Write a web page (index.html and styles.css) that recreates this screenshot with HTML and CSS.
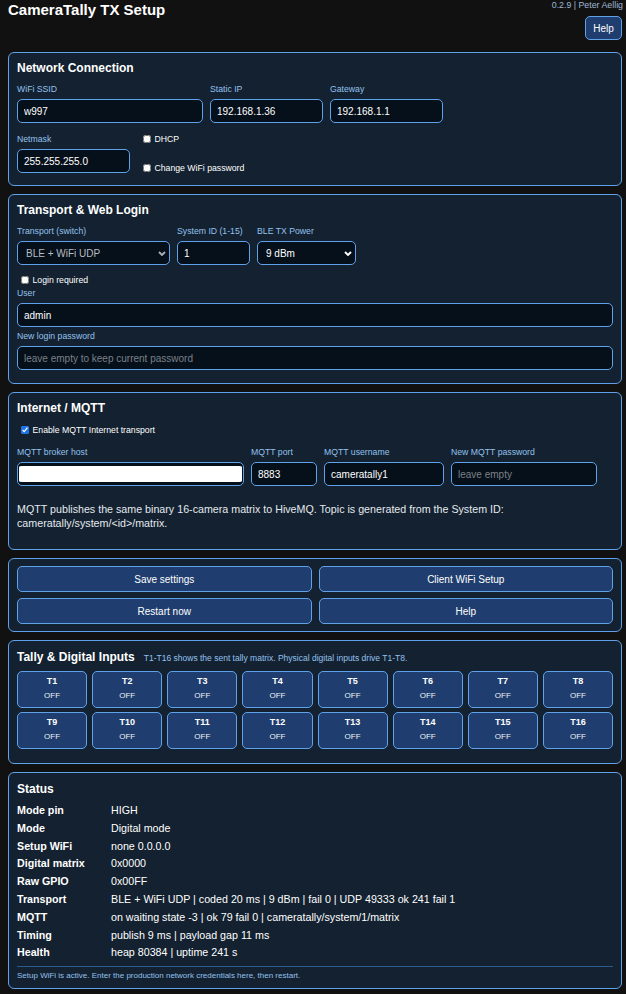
FILE: index.html
```html
<!DOCTYPE html>
<html lang="en">
  <head>
    <meta charset="UTF-8" />
    <meta name="viewport" content="width=device-width, initial-scale=1.0" />
    <title>CameraTally TX Setup</title>
    <link rel="stylesheet" href="styles.css">
  </head>
  <body>
    <div class="page">
      <header class="top">
        <h1>CameraTally TX Setup</h1>
        <div class="meta">
          <div class="version">0.2.9 | Peter Aellig</div>
          <button class="btn btn-top">Help</button>
        </div>
      </header>

      <section class="card card-net">
        <h2>Network Connection</h2>
        <div class="row">
          <div class="field w-ssid">
            <label>WiFi SSID</label>
            <input type="text" value="w997">
          </div>
          <div class="field w-ip">
            <label>Static IP</label>
            <input type="text" value="192.168.1.36">
          </div>
          <div class="field w-ip">
            <label>Gateway</label>
            <input type="text" value="192.168.1.1">
          </div>
        </div>
        <div class="row row-next">
          <div class="field w-ip">
            <label>Netmask</label>
            <input type="text" value="255.255.255.0">
          </div>
          <div class="checks">
            <label class="check"><input type="checkbox">DHCP</label>
            <label class="check"><input type="checkbox">Change WiFi password</label>
          </div>
        </div>
      </section>

      <section class="card card-login">
        <h2>Transport &amp; Web Login</h2>
        <div class="row">
          <div class="field w-transport">
            <label>Transport (switch)</label>
            <div class="select">
              <select disabled><option>BLE + WiFi UDP</option></select>
              <svg viewBox="0 0 8 5" width="8" height="5"><path d="M1 1l3 3 3-3" /></svg>
            </div>
          </div>
          <div class="field w-id">
            <label>System ID (1-15)</label>
            <input type="text" value="1">
          </div>
          <div class="field w-power">
            <label>BLE TX Power</label>
            <div class="select">
              <select><option>9 dBm</option></select>
              <svg viewBox="0 0 8 5" width="8" height="5"><path d="M1 1l3 3 3-3" /></svg>
            </div>
          </div>
        </div>
        <label class="check check-line"><input type="checkbox">Login required</label>
        <div class="field field-user">
          <label>User</label>
          <input type="text" value="admin">
        </div>
        <div class="field field-pass">
          <label>New login password</label>
          <input type="password" placeholder="leave empty to keep current password">
        </div>
      </section>

      <section class="card">
        <h2>Internet / MQTT</h2>
        <label class="check check-line"><input type="checkbox" checked>Enable MQTT Internet transport</label>
        <div class="row row-mqtt">
          <div class="field w-host">
            <label>MQTT broker host</label>
            <input type="text" class="redacted" value="">
          </div>
          <div class="field w-port">
            <label>MQTT port</label>
            <input type="text" value="8883">
          </div>
          <div class="field w-user">
            <label>MQTT username</label>
            <input type="text" value="cameratally1">
          </div>
          <div class="field w-mpass">
            <label>New MQTT password</label>
            <input type="password" placeholder="leave empty">
          </div>
        </div>
        <p class="info">MQTT publishes the same binary 16-camera matrix to HiveMQ. Topic is generated from the System ID: cameratally/system/&lt;id&gt;/matrix.</p>
      </section>

      <section class="card card-actions">
        <div class="actions">
          <button class="btn">Save settings</button>
          <button class="btn">Client WiFi Setup</button>
          <button class="btn">Restart now</button>
          <button class="btn">Help</button>
        </div>
      </section>

      <section class="card card-tally">
        <div class="title-line">
          <h2>Tally &amp; Digital Inputs</h2>
          <span class="note">T1-T16 shows the sent tally matrix. Physical digital inputs drive T1-T8.</span>
        </div>
        <div class="tiles" id="tiles"></div>
      </section>

      <section class="card card-status">
        <h2>Status</h2>
        <div class="status">
          <b>Mode pin</b><span>HIGH</span>
          <b>Mode</b><span>Digital mode</span>
          <b>Setup WiFi</b><span>none 0.0.0.0</span>
          <b>Digital matrix</b><span>0x0000</span>
          <b>Raw GPIO</b><span>0x00FF</span>
          <b>Transport</b><span>BLE + WiFi UDP | coded 20 ms | 9 dBm | fail 0 | UDP 49333 ok 241 fail 1</span>
          <b>MQTT</b><span>on waiting state -3 | ok 79 fail 0 | cameratally/system/1/matrix</span>
          <b>Timing</b><span>publish 9 ms | payload gap 11 ms</span>
          <b>Health</b><span>heap 80384 | uptime 241 s</span>
        </div>
        <div class="hint">Setup WiFi is active. Enter the production network credentials here, then restart.</div>
      </section>
    </div>
    <script>
      const tiles = document.getElementById("tiles");
      for (let i = 1; i <= 16; i++) {
        const t = document.createElement("div");
        t.className = "tile";
        t.innerHTML = `<b>T${i}</b><span>OFF</span>`;
        tiles.appendChild(t);
      }
    </script>
  </body>
</html>
```

FILE: styles.css
```css
* {
  margin: 0;
  padding: 0;
  box-sizing: border-box;
}

body {
  background: #111111;
  color: #ffffff;
  font-family: "Liberation Sans", Arial, sans-serif;
}

.page {
  margin: 0 4px 0 8px;
}

.top {
  display: flex;
  justify-content: space-between;
  height: 40px;
}

h1 {
  font-size: 15px;
  line-height: 20px;
  font-weight: bold;
}

.meta {
  display: flex;
  flex-direction: column;
  align-items: flex-end;
}

.version {
  font-size: 8.8px;
  line-height: 11px;
  color: #9fb9d3;
  margin-right: -1px;
}

.btn {
  background: #1f3d6e;
  color: #ffffff;
  border: 1px solid #5fa2ea;
  border-radius: 5px;
  font-family: "Liberation Sans", Arial, sans-serif;
  font-size: 10px;
  height: 26px;
}

.btn-top {
  margin-top: 5px;
  width: 37px;
  height: 24px;
}

.card {
  background: #132130;
  border: 1px solid #5fa2ea;
  border-radius: 6px;
  padding: 8px 8px 13px;
  margin-top: 8px;
}

.top + .card {
  margin-top: 12px;
}

h2 {
  font-size: 12px;
  line-height: 15px;
  font-weight: bold;
  margin-bottom: 8px;
}

.row {
  display: flex;
  gap: 7px;
  align-items: flex-start;
}

.row-next {
  margin-top: 11px;
}

.card-net {
  padding-bottom: 12px;
}

.field {
  display: flex;
  flex-direction: column;
}

.field > label {
  font-size: 8.7px;
  line-height: 11px;
  color: #93c1ee;
  margin-bottom: 4px;
}

input[type="text"],
input[type="password"],
select {
  height: 24px;
  width: 100%;
  background: #06101a;
  color: #ffffff;
  border: 1px solid #5fa2ea;
  border-radius: 5px;
  font-family: "Liberation Sans", Arial, sans-serif;
  font-size: 10px;
  padding: 0 6px;
  outline: none;
}

input::placeholder {
  color: #7b8088;
}

select {
  appearance: none;
  padding-left: 8px;
}

select:disabled {
  color: #b9bcc1;
  opacity: 1;
}

.select {
  position: relative;
}

.select svg {
  position: absolute;
  right: 4px;
  top: 10px;
  fill: none;
  stroke: #ffffff;
  stroke-width: 1.9;
}

.select select:disabled + svg {
  stroke: #a9adb3;
}

.w-ssid { width: 186px; }
.w-ip { width: 113px; }
.w-transport { width: 153px; }
.w-id { width: 73px; }
.w-power { width: 99px; }
.w-host { width: 227px; }
.w-port { width: 66px; }
.w-user { width: 120px; }
.w-mpass { width: 146px; }

.checks {
  display: flex;
  flex-direction: column;
  gap: 19px;
  margin-left: 2px;
}

.check {
  display: flex;
  align-items: center;
  font-size: 8.7px;
  line-height: 10px;
  color: #ffffff;
}

.check input {
  width: 8px;
  height: 8px;
  margin: 0 4px 1px 3.5px;
  accent-color: #1a73e8;
}

.check-line {
  line-height: 13px;
  margin-top: 9px;
}

h2 + .check-line {
  margin-top: 0;
}

.card-login .row {
  margin-top: 1px;
}

.field-user {
  margin-top: 1px;
}

.field-pass {
  margin-top: 4px;
}

.row-mqtt {
  margin-top: 10px;
}

input.redacted {
  padding: 3px 1px;
  background: linear-gradient(#ffffff, #ffffff) content-box, #06101a;
}

.info {
  font-size: 10.7px;
  line-height: 14px;
  color: #e4e9ef;
  margin: 16px 0 6px;
}

.card-actions {
  padding: 7px 8px;
}

.actions {
  display: grid;
  grid-template-columns: 1fr 1fr;
  gap: 6px 7px;
}

.card-tally {
  padding-top: 9px;
  padding-bottom: 14px;
}

.title-line {
  display: flex;
  align-items: baseline;
  gap: 9px;
  margin-bottom: 6px;
}

.title-line h2 {
  margin-bottom: 0;
}

.note {
  font-size: 8.5px;
  color: #93c1ee;
}

.tiles {
  display: grid;
  grid-template-columns: repeat(8, 1fr);
  gap: 4px 5px;
}

.tile {
  background: #1f3d6e;
  border: 1px solid #5fa2ea;
  border-radius: 5px;
  height: 37px;
  padding-top: 4px;
  display: flex;
  flex-direction: column;
  align-items: center;
}

.tile b {
  font-size: 9px;
  line-height: 11px;
}

.tile span {
  font-size: 8px;
  line-height: 10px;
  margin-top: 4px;
  color: #eef2f6;
}

.card-status {
  padding-top: 9px;
  padding-bottom: 7px;
}

.card-status h2 {
  margin-bottom: 5px;
}

.status {
  display: grid;
  grid-template-columns: 94px 1fr;
  font-size: 10.7px;
  line-height: 17.8px;
}

.hint {
  border-top: 1px solid #2d5a8c;
  margin-top: 4px;
  padding-top: 4px;
  font-size: 8px;
  line-height: 10px;
  color: #93c1ee;
}
```
